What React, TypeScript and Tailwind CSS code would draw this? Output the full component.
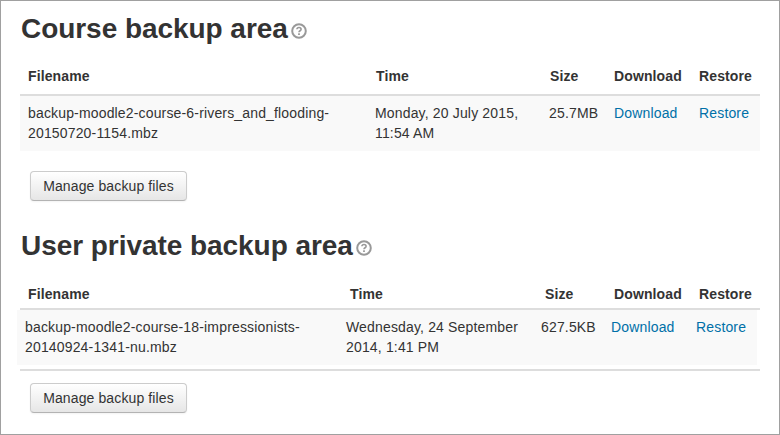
function HelpIcon() {
  return (
    <svg width="16" height="16" viewBox="0 0 16 16" fill="none" className="ml-[3px] mt-[3px] shrink-0" aria-hidden="true">
      <circle cx="8" cy="8" r="6.8" stroke="#999999" strokeWidth="2" />
      <path d="M5.9 6.3C6 5 6.9 4.5 8 4.5c1.2 0 2.1.7 2.1 1.7 0 1.6-2.1 1.5-2.1 3.1" stroke="#999999" strokeWidth="1.6" />
      <rect x="7.1" y="10.3" width="1.8" height="1.7" fill="#999999" />
    </svg>
  );
}

function ManageButton() {
  return (
    <button
      type="button"
      className="ml-[29px] h-[30px] w-[157px] rounded-[4px] border border-[#cccccc] border-b-[#b3b3b3] bg-gradient-to-b from-white to-[#e6e6e6] text-center text-[14px] leading-5 tracking-[0.12px] text-[#333333] shadow-[0_1px_2px_rgba(0,0,0,0.05)]"
    >
      Manage backup files
    </button>
  );
}

function Heading({ title }: { title: string }) {
  return (
    <div className="flex h-[36px] items-center pl-[20px]">
      <h2 className="text-[28px] font-bold leading-[36px] tracking-[-0.05px] text-[#333333]">{title}</h2>
      <HelpIcon />
    </div>
  );
}

function HeaderRow({ cols }: { cols: string }) {
  return (
    <div className={`mx-[19px] grid items-center border-b-2 border-[#dddddd] pl-[8px] text-[14px] font-bold tracking-[0.12px] text-[#333333] ${cols}`}>
      <div>Filename</div>
      <div>Time</div>
      <div>Size</div>
      <div>Download</div>
      <div>Restore</div>
    </div>
  );
}

function FileRow({
  cols,
  file,
  time,
  size,
}: {
  cols: string;
  file: string[];
  time: string[];
  size: string;
}) {
  return (
    <div className={`grid h-[55px] bg-[#f9f9f9] pl-[8px] pt-[7px] text-[14px] leading-5 tracking-[0.16px] text-[#333333] ${cols}`}>
      <div>
        {file.map((line) => (
          <div key={line}>{line}</div>
        ))}
      </div>
      <div>
        {time.map((line) => (
          <div key={line}>{line}</div>
        ))}
      </div>
      <div>{size}</div>
      <a className="text-[#0070a8]">Download</a>
      <a className="text-[#0070a8]">Restore</a>
    </div>
  );
}

export default function App() {
  return (
    <div className="h-[435px] w-[780px] overflow-hidden border border-[#a0a0a0] bg-white font-['Liberation_Sans',Arial,sans-serif]">
      <div className="pt-[10px]">
        <Heading title="Course backup area" />
      </div>
      <div className="pt-[11px]">
        <HeaderRow cols="h-[38px] grid-cols-[348px_174px_64px_85px_1fr]" />
      </div>
      <div className="mx-[19px]">
        <FileRow
          cols="grid-cols-[347px_174px_65px_85px_1fr]"
          file={["backup-moodle2-course-6-rivers_and_flooding-", "20150720-1154.mbz"]}
          time={["Monday, 20 July 2015,", "11:54 AM"]}
          size="25.7MB"
        />
      </div>
      <div className="pt-[20px]">
        <ManageButton />
      </div>
      <div className="pt-[27px]">
        <Heading title="User private backup area" />
      </div>
      <div className="pt-[16px]">
        <HeaderRow cols="h-[30px] grid-cols-[322px_195px_69px_85px_1fr]" />
      </div>
      <div className="ml-[16px] mr-[22px]">
        <FileRow
          cols="grid-cols-[321px_195px_70px_85px_1fr]"
          file={["backup-moodle2-course-18-impressionists-", "20140924-1341-nu.mbz"]}
          time={["Wednesday, 24 September", "2014, 1:41 PM"]}
          size="627.5KB"
        />
      </div>
      <div className="mx-[19px] mt-[4px] h-[2px] bg-[#dddddd]" />
      <div className="pt-[12px]">
        <ManageButton />
      </div>
    </div>
  );
}
